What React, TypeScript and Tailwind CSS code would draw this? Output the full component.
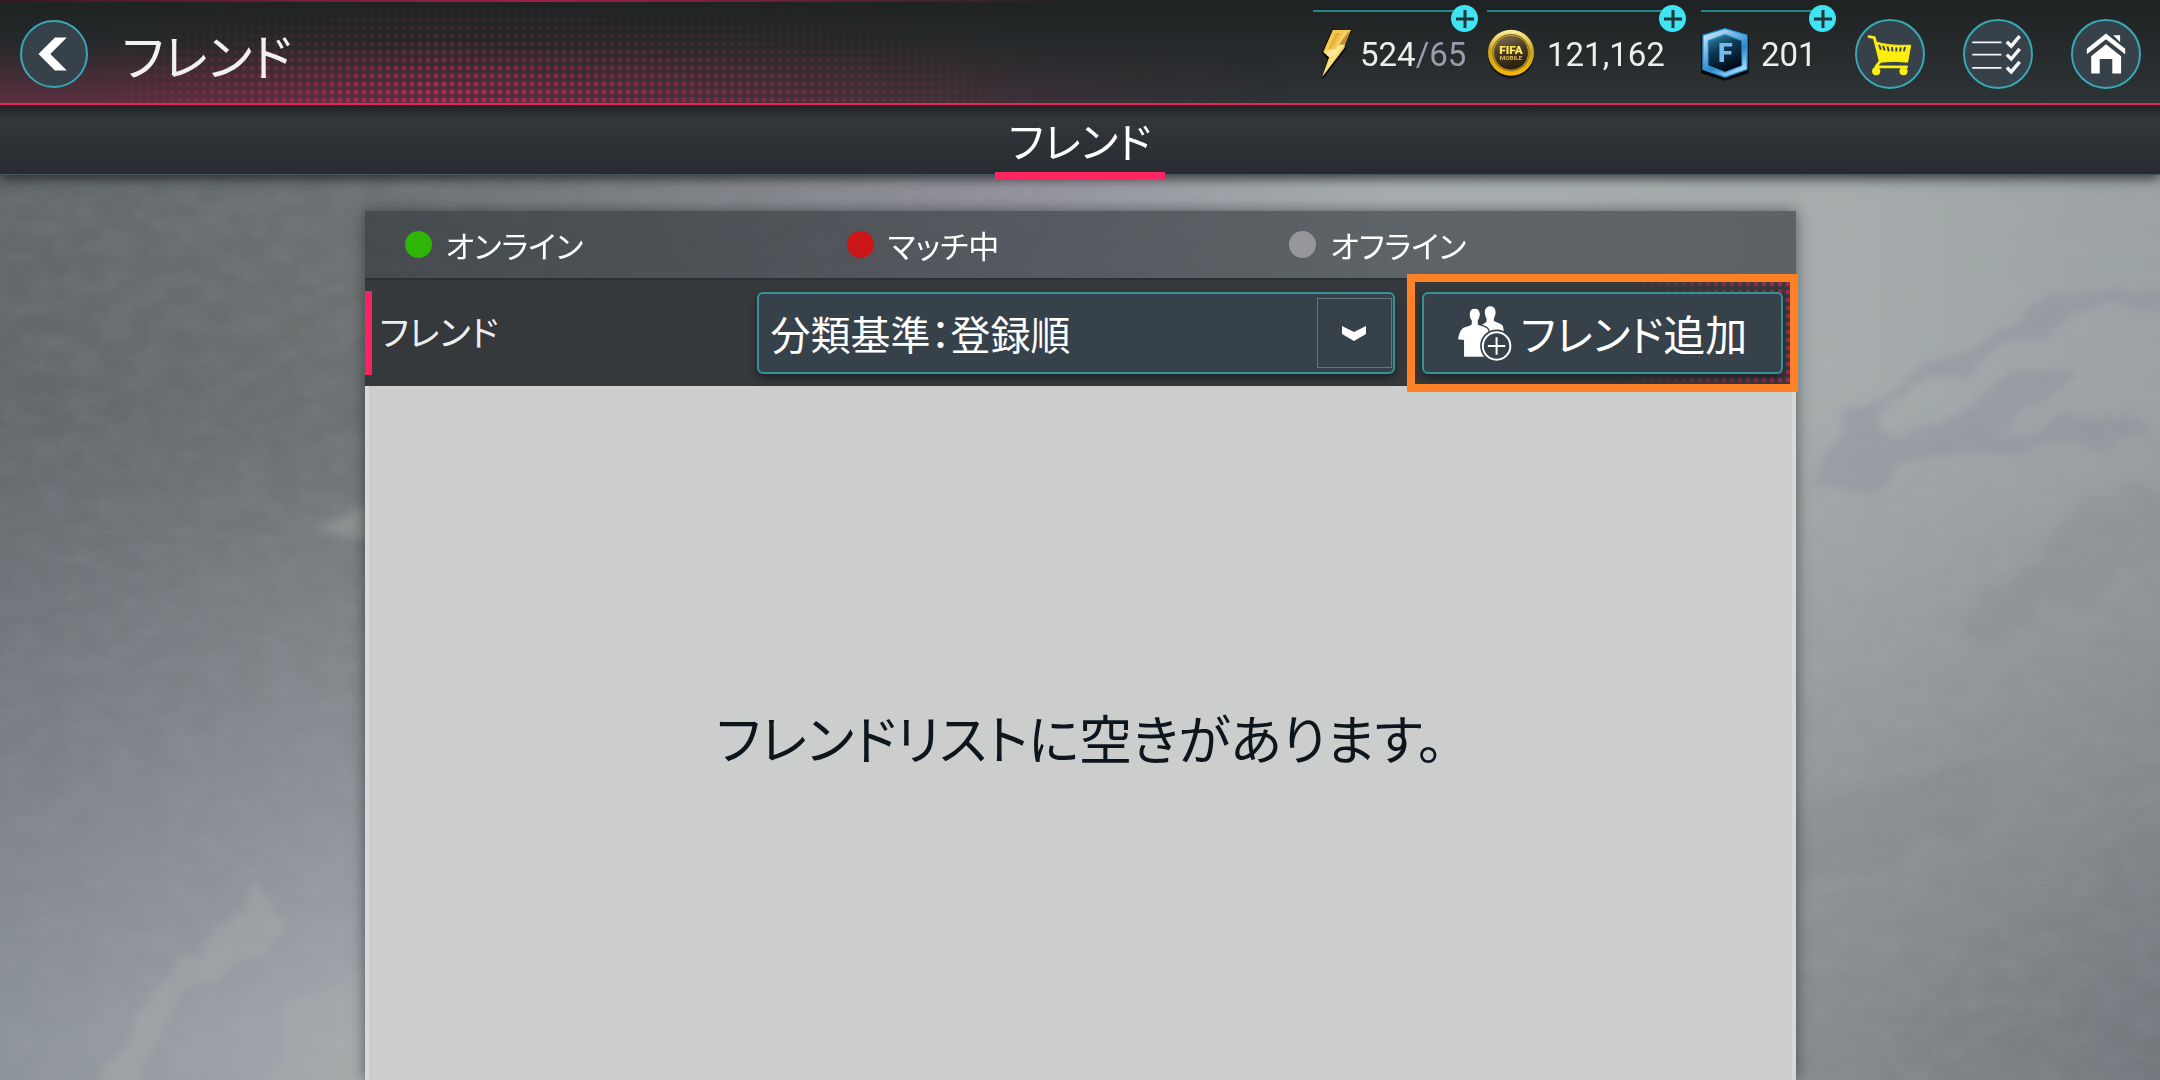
import React from "react";

const dots =
  "bg-[radial-gradient(#e0245e_40%,transparent_50%)] bg-[length:8px_8px]";

function BoltIcon() {
  return (
    <svg viewBox="0 0 92 152" className="h-[50px] w-[31px] shrink-0" aria-hidden="true">
      <defs>
        <linearGradient id="bolt" x1="0" y1="0" x2="1" y2="1">
          <stop offset="0" stopColor="#b8720f" />
          <stop offset="0.3" stopColor="#e6ac2c" />
          <stop offset="0.5" stopColor="#ffe58a" />
          <stop offset="0.7" stopColor="#d8961c" />
          <stop offset="1" stopColor="#ffd54a" />
        </linearGradient>
      </defs>
      <path d="M34 4 L90 6 L68 52 L72 60 L4 150 L22 92 L4 72 Z" fill="#0d0b06" stroke="#0d0b06" strokeWidth="5" />
      <path d="M35 3 L90 3 L72 46 L70 58 L3 145 L24 86 L6 70 Z" fill="url(#bolt)" />
      <path d="M35 3 L90 3 L78 14 L44 12 L20 62 L6 70 Z" fill="#f8cf55" opacity="0.85" />
      <path d="M78 14 L90 3 L72 46 L54 48 L62 36 Z" fill="#a8660c" opacity="0.7" />
      <path d="M6 70 L20 62 L46 62 L58 36 L52 52 L62 50 L38 78 L24 86 Z" fill="#fff0b0" opacity="0.75" />
      <path d="M24 86 L46 80 L3 145 Z" fill="#fbe07a" opacity="0.7" />
    </svg>
  );
}

function CoinIcon() {
  return (
    <svg viewBox="0 0 144 152" className="h-[50px] w-[48px] shrink-0" aria-hidden="true">
      <defs>
        <linearGradient id="rim" x1="0" y1="0" x2="0" y2="1">
          <stop offset="0" stopColor="#fff3a0" />
          <stop offset="0.45" stopColor="#c9a020" />
          <stop offset="1" stopColor="#f7b900" />
        </linearGradient>
        <linearGradient id="face" x1="0" y1="0" x2="0.3" y2="1">
          <stop offset="0" stopColor="#8a7a5c" />
          <stop offset="0.5" stopColor="#4a3b24" />
          <stop offset="1" stopColor="#2c2010" />
        </linearGradient>
      </defs>
      <circle cx="72" cy="79" r="70" fill="#101112" />
      <circle cx="72" cy="72" r="70" fill="url(#rim)" />
      <circle cx="72" cy="72" r="57" fill="#8c6a08" />
      <circle cx="72" cy="72" r="53" fill="url(#face)" stroke="#e8c23a" strokeWidth="2" />
      <text x="72" y="75" textAnchor="middle" fill="#ffe860" fontFamily="Roboto, sans-serif" fontWeight="900" fontSize="36">FIFA</text>
      <text x="72" y="95" textAnchor="middle" fill="#d9bd55" fontFamily="Roboto, sans-serif" fontWeight="700" fontSize="19">MOBILE</text>
    </svg>
  );
}

function PointIcon() {
  return (
    <svg viewBox="0 0 144 162" className="h-[54px] w-[48px] shrink-0" aria-hidden="true">
      <defs>
        <linearGradient id="hexRim" x1="0" y1="0" x2="0.6" y2="1">
          <stop offset="0" stopColor="#e6f4ff" />
          <stop offset="0.4" stopColor="#7db4e0" />
          <stop offset="0.7" stopColor="#2f86c8" />
          <stop offset="1" stopColor="#a8d4f5" />
        </linearGradient>
        <linearGradient id="hexFace" x1="0" y1="0" x2="0.4" y2="1">
          <stop offset="0" stopColor="#3f8fae" />
          <stop offset="0.45" stopColor="#0b3a54" />
          <stop offset="1" stopColor="#020b18" />
        </linearGradient>
      </defs>
      <path d="M72 2 L143 24 V139 L72 161 L1 139 V24 Z" fill="#05080b" />
      <path d="M72 5 L138 25 V127 L72 150 L6 127 V25 Z" fill="url(#hexRim)" stroke="#1fa2ea" strokeWidth="4" />
      <path d="M72 22 L123 41 V116 L72 136 L21 116 V41 Z" fill="url(#hexFace)" stroke="#2aa0e0" strokeWidth="3" />
      <text x="73" y="106" textAnchor="middle" fill="#79b8ec" fontFamily="Roboto, sans-serif" fontWeight="900" fontSize="80">F</text>
    </svg>
  );
}

function CartIcon() {
  return (
    <svg viewBox="0 0 210 210" className="size-full" aria-hidden="true">
      <path d="M38 50 L55 53 L74 128 L60 146 H158" fill="none" stroke="#fdee0c" strokeWidth="9" strokeLinecap="round" strokeLinejoin="round" />
      <path d="M58 66 Q100 80 171 77 L161 131 Q118 126 74 131 Z" fill="#fdee0c" stroke="#fdee0c" strokeWidth="3" strokeLinejoin="round" />
      <path d="M70 76 L76 91 M83 79 L88 94 M97 81 L101 96 M111 83 L113 97 M125 84 L125 97 M139 84 L137 97 M153 83 L149 96" stroke="#36414a" strokeWidth="6" />
      <circle cx="61" cy="160" r="13" fill="#fdee0c" />
      <circle cx="148" cy="160" r="13" fill="#fdee0c" />
    </svg>
  );
}

function ListIcon() {
  return (
    <svg viewBox="0 0 210 210" className="size-full" fill="none" stroke="#f4f5f5" aria-hidden="true">
      <path d="M23 68 H116 M23 107 H116 M23 149 H116" strokeWidth="6" />
      <path d="M133 66 L147 80 L174 48 M133 107 L147 121 L174 89 M133 148 L147 162 L174 130" strokeWidth="11" />
    </svg>
  );
}

function HomeIcon() {
  return (
    <svg viewBox="0 0 210 210" className="size-full" fill="#ffffff" aria-hidden="true">
      <path d="M44 88 L105 40 L166 88 V106 L105 58 L44 106 Z" />
      <path d="M128 45 H150 V68 Z" />
      <path d="M105 74 L153 112 V167 H125 V121 H85 V167 H58 V112 Z" />
    </svg>
  );
}

function FriendsAddIcon() {
  return (
    <svg viewBox="0 0 164 164" className="size-[55px] shrink-0" aria-hidden="true">
      <path
        d="M99 1 C109 1 115 8 115 19 C115 27 112 32 110 37 V45 C120 50 133 53 137 60 L140 78 H70 V58 C78 53 86 50 88 46 V37 C85 32 83 27 83 19 C83 8 89 1 99 1 Z"
        fill="#fff"
      />
      <path
        d="M53 6 C64 6 70 13 70 25 C70 34 67 39 64 44 V54 C74 59 90 61 94 70 L104 98 V153 H19 V103 L1 101 C3 86 8 70 17 64 C27 59 38 59 42 54 V44 C38 39 36 34 36 25 C36 13 42 6 53 6 Z"
        fill="#fff"
        stroke="#36414a"
        strokeWidth="4"
      />
      <circle cx="118" cy="119" r="49" fill="#36414a" />
      <circle cx="118" cy="119" r="41" fill="none" stroke="#fff" strokeWidth="6" />
      <path d="M118 93 V145 M92 119 H144" stroke="#fff" strokeWidth="6" />
    </svg>
  );
}

type StatProps = { label: string; width: string; icon: React.ReactNode; children: React.ReactNode };

function Stat({ label, width, icon, children }: StatProps) {
  return (
    <button type="button" aria-label={label} className={`relative flex h-[70px] items-center gap-2 text-left ${width}`}>
      <span className="absolute -top-[9px] right-4 left-0 h-[2px] bg-[#24858a]" />
      <span className="absolute -top-[14px] right-0 flex size-[27px] items-center justify-center rounded-full bg-[#3fe3f2]">
        <svg viewBox="0 0 18 18" className="size-[18px]" stroke="#20343a" strokeWidth="3" aria-hidden="true">
          <path d="M9 0 V18 M0 9 H18" />
        </svg>
      </span>
      {icon}
      <span className="pt-[2px] font-['Roboto',sans-serif] text-[33px] leading-10 whitespace-nowrap text-[#eeeeef]">{children}</span>
    </button>
  );
}

const round =
  "size-[70px] shrink-0 rounded-full border-2 border-[#36a9b6] bg-[#36414a] overflow-hidden";

function Header() {
  return (
    <header className="relative z-20 border-b-2 border-[#ee2558] bg-linear-to-b from-[#1f2223] to-[#2e3335]">
      <div className="pointer-events-none absolute inset-0 bg-linear-to-t from-[#e0245e]/25 to-transparent to-60% [mask-image:linear-gradient(to_right,black_20%,transparent_60%)]" />
      <div
        className={`pointer-events-none absolute inset-0 opacity-70 [mask-composite:intersect] [mask-image:linear-gradient(to_right,transparent_4%,black_20%,transparent_48%),linear-gradient(to_top,black_10%,rgba(0,0,0,0.3)_60%,transparent)] ${dots}`}
      />
      <div className="pointer-events-none absolute inset-x-0 top-0 h-[2px] bg-linear-to-r from-[#3a1626] via-[#a02048] via-25% to-transparent to-50%" />
      <div className="relative flex items-center justify-between pt-[19px] pr-[19px] pb-[14px] pl-5">
        <div className="flex items-center gap-[34px]">
          <button type="button" aria-label="戻る" className="size-[68px] shrink-0 overflow-hidden rounded-full border-2 border-[#36a9b6] bg-[#36414a]">
            <svg viewBox="0 0 70 70" className="size-full" aria-hidden="true">
              <path d="M36 17 H49 L31 35 L49 53 H36 L18 35 Z" fill="#fff" />
            </svg>
          </button>
          <h1 className="text-[50px] leading-[64px] text-[#f1f1f2]">フレンド</h1>
        </div>
        <div className="flex items-center">
          <div className="mr-[19px] flex">
            <Stat label="エナジー" width="w-[165px] mr-[9px] pl-2" icon={<BoltIcon />}>
              524<span className="text-[#999eac]">/65</span>
            </Stat>
            <Stat label="コイン" width="w-[199px] mr-[15px]" icon={<CoinIcon />}>
              <span className="pl-1">121,162</span>
            </Stat>
            <Stat label="ポイント" width="w-[135px]" icon={<PointIcon />}>
              <span className="pl-1">201</span>
            </Stat>
          </div>
          <nav className="flex gap-[38px]">
            <button type="button" aria-label="ショップ" className={round}><CartIcon /></button>
            <button type="button" aria-label="クエスト" className={round}><ListIcon /></button>
            <button type="button" aria-label="ホーム" className={round}><HomeIcon /></button>
          </nav>
        </div>
      </div>
    </header>
  );
}

function Backdrop() {
  return (
    <div className="pointer-events-none absolute inset-0 overflow-hidden" aria-hidden="true">
      <div className="absolute inset-0 bg-[linear-gradient(to_right,#62676a_0%,#6c7172_17%,#95969d_48%,#a9b0b1_65%,#a6adad_85%,#9ba2a3_100%)]" />
      <div className="absolute inset-0 bg-[linear-gradient(to_right,#8c939b_0%,#a4a9b0_17%,#a0a5aa_60%,#868b8d_84%,#74777c_100%)] [mask-image:linear-gradient(to_bottom,transparent_25%,black_95%)]" />
      <svg viewBox="0 0 2160 906" preserveAspectRatio="none" className="absolute inset-0 size-full">
        <defs>
          <filter id="soft" x="-10%" y="-10%" width="120%" height="120%">
            <feTurbulence type="fractalNoise" baseFrequency="0.02" numOctaves="4" seed="4" result="n" />
            <feDisplacementMap in="SourceGraphic" in2="n" scale="36" xChannelSelector="R" yChannelSelector="G" />
            <feGaussianBlur stdDeviation="4" />
          </filter>
          <filter id="mottle" x="0" y="0" width="100%" height="100%">
            <feTurbulence type="fractalNoise" baseFrequency="0.03 0.05" numOctaves="4" seed="9" />
            <feColorMatrix values="0 0 0 0 0.46  0 0 0 0 0.44  0 0 0 0 0.52  1.6 0 0 0 -0.5" />
          </filter>
        </defs>
        <rect width="2160" height="906" filter="url(#mottle)" opacity="0.13" />
        <g filter="url(#soft)">
          <g fill="#868d9b" opacity="0.4">
            <path d="M1815 310 L1850 235 L1900 215 L1975 170 L2040 130 L2085 120 L2160 118 V136 L2085 140 L2030 160 L1960 195 L1905 225 L1875 250 L1890 265 L1960 240 L2000 205 L2070 190 L2080 202 L2030 235 L1990 255 L2050 250 L2140 238 L2145 262 L2030 272 L1960 272 L1900 290 L1870 320 L1810 320 Z" />
          </g>
          <g fill="#6f757c" opacity="0.14">
            <path d="M1960 460 L2010 400 L2060 350 L2130 310 L2180 320 V380 L2120 400 L2060 430 L1990 470 Z" />
            <path d="M1780 640 L1960 590 L2000 600 L1970 660 L1900 680 L1780 720 Z" />
          </g>
          <g fill="#a9b0a8" opacity="0.4">
            <path d="M340 340 L400 310 V370 L325 360 Z" />
            <path d="M80 930 L140 840 L170 800 L215 760 L260 710 L270 740 L290 750 L280 770 L240 790 L180 830 L150 880 L120 930 Z" />
            <path d="M290 830 L400 780 V930 H270 Z" />
          </g>
        </g>
      </svg>
    </div>
  );
}

const statuses = [
  { label: "オンライン", color: "bg-[#2eb506]" },
  { label: "マッチ中", color: "bg-[#cb1517]" },
  { label: "オフライン", color: "bg-[#97979b]" },
];

export default function App() {
  return (
    <div className="flex min-h-screen flex-col bg-[#8d9295] font-['Noto_Sans_CJK_JP',sans-serif] [font-feature-settings:'palt']">
      <Header />
      <nav className="relative z-10 flex justify-center border-b border-[#4a555b] bg-linear-to-b from-[#1f2224] via-[#32373a] via-20% to-[#282b30] shadow-[0_3px_12px_rgba(20,20,24,0.8)]">
        <a href="#friends" aria-current="page" className="relative w-[170px] pt-[5px] pb-1 text-center text-[42px] leading-[60px] text-white">
          フレンド
          <span className="absolute inset-x-0 -bottom-[5px] h-[7px] bg-[#ff2560]" />
        </a>
      </nav>
      <main className="relative flex flex-1 flex-col items-center pt-9">
        <Backdrop />
        <section className="relative flex w-[66.25%] flex-1 flex-col shadow-[0_0_14px_rgba(30,35,40,0.6)]">
          <ul className="grid grid-cols-3 bg-[#2c3136]/60 pr-16 pl-10">
            {statuses.map((s) => (
              <li key={s.label} className="flex items-center gap-[14px] py-[13px] text-[31px] leading-[41px] text-white">
                <span className={`size-[27px] rounded-full ${s.color}`} />
                {s.label}
              </li>
            ))}
          </ul>
          <div className="relative flex items-center border-t-2 border-[#2b3033] bg-[#35393c] py-[11px] pr-[13px]">
            <div
              className={`pointer-events-none absolute inset-y-0 right-0 w-[180px] opacity-60 [mask-image:linear-gradient(to_right,transparent,black)] ${dots}`}
            />
            <span className="h-[84px] w-[7px] bg-[#f7245f]" />
            <label htmlFor="sort" className="flex-1 pb-1 pl-2 text-[35px] leading-[50px] text-[#eeeeef]">フレンド</label>
            <div className="relative w-[638px]">
              <select
                id="sort"
                defaultValue="registered"
                className="block h-[82px] w-full appearance-none rounded-md border-2 border-[#31949b] bg-[#36414a] pl-3 text-[40px] leading-[60px] text-white shadow-[0_4px_8px_rgba(0,0,0,0.4)]"
              >
                <option value="registered">分類基準：登録順</option>
              </select>
              <span className="pointer-events-none absolute inset-y-[6px] right-[3px] flex w-[75px] items-center justify-center border border-[#69737a]">
                <svg viewBox="0 0 24 15" className="h-[15px] w-6" aria-hidden="true">
                  <path d="M0 0 L12 6 L24 0 V8 L12 15 L0 8 Z" fill="#fff" />
                </svg>
              </span>
            </div>
            <div className="relative ml-[27px]">
              <button
                type="button"
                className="relative flex h-[82px] w-[361px] items-center justify-center gap-[9px] rounded-md border-2 border-[#31949b] bg-[#36414a] text-[42px] leading-[60px] whitespace-nowrap text-white shadow-[0_4px_8px_rgba(0,0,0,0.4)]"
              >
                <FriendsAddIcon />
                フレンド追加
              </button>
              <span className="pointer-events-none absolute -inset-x-[15px] -inset-y-[18px] border-8 border-[#ff8125]" />
            </div>
          </div>
          <div className="flex flex-1 items-center justify-center border-x-4 border-[#d6d9d8] bg-[#cccecd]">
            <p className="pt-2 text-[53px] leading-[76px] text-[#0c161c]">フレンドリストに空きがあります。</p>
          </div>
        </section>
      </main>
    </div>
  );
}
